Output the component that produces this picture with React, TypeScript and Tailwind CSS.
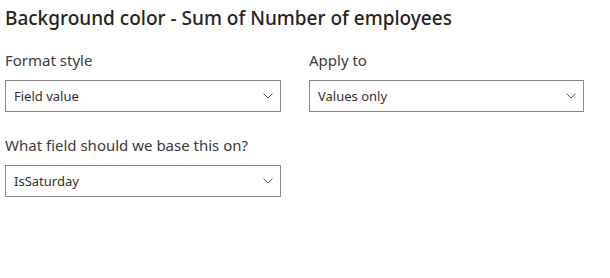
import React from "react";

function Chevron() {
  return (
    <svg width="10" height="6" viewBox="0 0 10 6" fill="none" className="shrink-0">
      <path d="M0.5 0.5 L5 5 L9.5 0.5" stroke="#605e5c" strokeWidth="1" />
    </svg>
  );
}

function Dropdown({ value, width }: { value: string; width: string }) {
  return (
    <div
      className={`flex h-[32px] items-center justify-between border border-[#8a8886] bg-white pl-[8px] pr-[7px] ${width}`}
    >
      <span className="text-[13px] leading-[18px] text-[#323130]">{value}</span>
      <Chevron />
    </div>
  );
}

export default function App() {
  return (
    <div
      className="h-[278px] w-[610px] bg-white pl-[5px] text-[#323130]"
      style={{ fontFamily: '"Segoe UI", "Noto Sans", sans-serif' }}
    >
      <h1 className="pt-[4px] text-[19px] leading-[28px] font-medium text-[#252423]">
        Background color - Sum of Number of employees
      </h1>
      <div className="mt-[18px] flex gap-[28px]">
        <div className="flex flex-col">
          <label className="text-[15px] leading-[20px] text-[#3b3a39]">Format style</label>
          <div className="mt-[10px]">
            <Dropdown value="Field value" width="w-[276px]" />
          </div>
        </div>
        <div className="flex flex-col">
          <label className="text-[15px] leading-[20px] text-[#3b3a39]">Apply to</label>
          <div className="mt-[10px]">
            <Dropdown value="Values only" width="w-[275px]" />
          </div>
        </div>
      </div>
      <div className="mt-[23px] flex flex-col">
        <label className="text-[15px] leading-[20px] text-[#3b3a39]">What field should we base this on?</label>
        <div className="mt-[10px]">
          <Dropdown value="IsSaturday" width="w-[276px]" />
        </div>
      </div>
    </div>
  );
}
